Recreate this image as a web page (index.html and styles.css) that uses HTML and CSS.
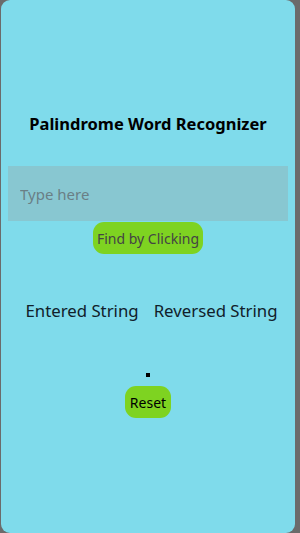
FILE: index.html
```html
<!DOCTYPE html>
<html lang="en">
  <head>
    <meta charset="UTF-8" />
    <meta name="viewport" content="width=device-width, initial-scale=1.0" />
    <title>Palindrome</title>
    <link rel="stylesheet" href="styles.css">
  </head>
  <body>
    <div class="screen">
      <div class="title">Palindrome Word Recognizer</div>
      <input class="word-input" type="text" placeholder="Type here" />
      <div class="find-btn">Find by Clicking</div>
      <div class="results">
        <div class="entered">Entered String</div>
        <div class="reversed">Reversed String</div>
      </div>
      <div class="dot"></div>
      <div class="reset-btn">Reset</div>
    </div>
  </body>
</html>
```

FILE: styles.css
```css
body {
  margin: 0;
  background-color: #6b6b6b;
  font-family: "Noto Sans", "Open Sans", sans-serif;
}
.screen {
  margin-left: 1px;
  width: 294px;
  height: 533px;
  border-radius: 9px;
  background-color: #7fdbeb;
  display: flex;
  flex-direction: column;
  align-items: center;
  padding-top: 112px;
  box-sizing: border-box;
}
.title {
  font-size: 16.5px;
  font-weight: bold;
  color: #000;
  line-height: 24px;
}
.word-input {
  margin-top: 30px;
  width: 280px;
  height: 55px;
  box-sizing: border-box;
  border: none;
  outline: none;
  background-color: #88c7d1;
  padding: 0 12px;
  font-family: inherit;
  font-size: 15px;
  color: #333;
}
.word-input::placeholder {
  color: #6a7f86;
}
.find-btn {
  margin-top: 1px;
  height: 32px;
  width: 110px;
  box-sizing: border-box;
  border-radius: 11px;
  background-color: #7ed321;
  color: #444;
  font-size: 14px;
  display: flex;
  align-items: center;
  justify-content: center;
}
.results {
  margin-top: 44px;
  margin-left: 7px;
  display: flex;
  gap: 15px;
  font-size: 16.8px;
  color: #10202a;
  line-height: 26px;
}
.dot {
  margin-top: 49px;
  width: 4px;
  height: 4px;
  background-color: #000;
}
.reset-btn {
  margin-top: 9px;
  height: 32px;
  width: 46px;
  box-sizing: border-box;
  border-radius: 11px;
  background-color: #7ed321;
  color: #000;
  font-size: 14px;
  display: flex;
  align-items: center;
  justify-content: center;
}
```
